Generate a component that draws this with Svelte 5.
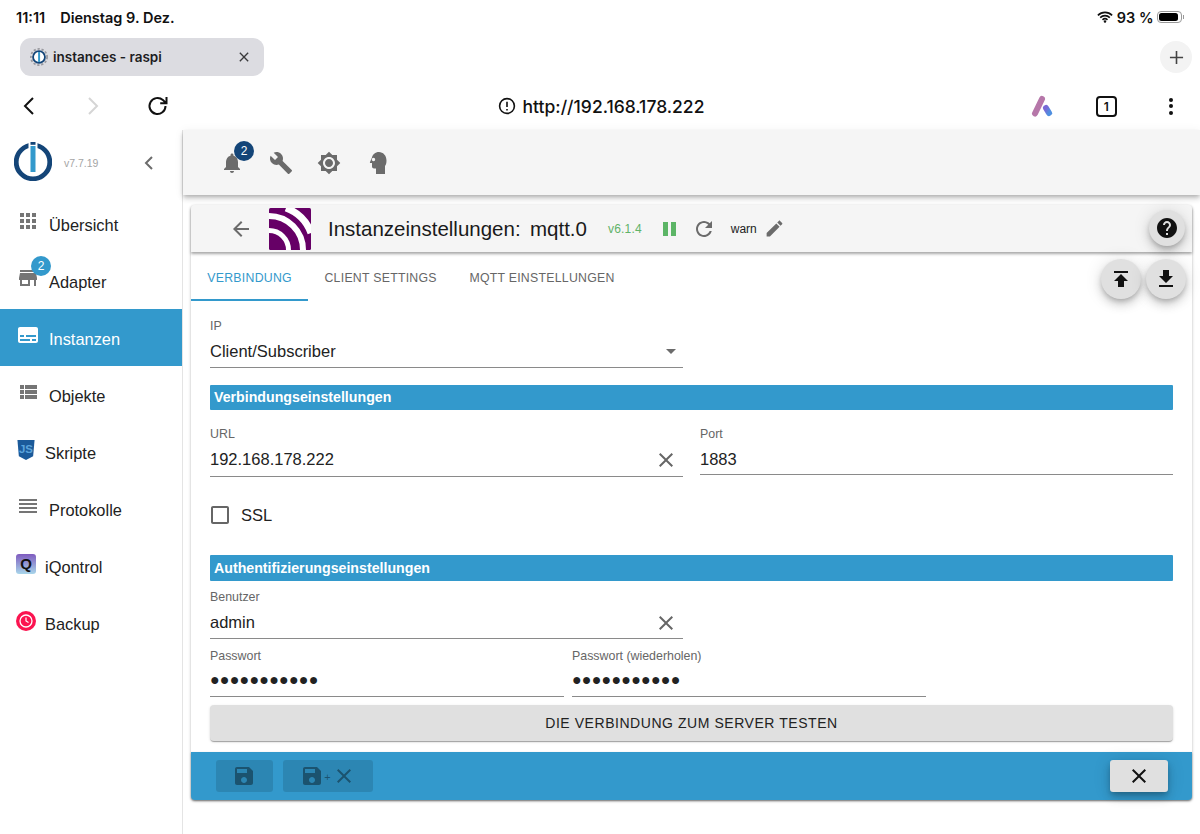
<script>
  const P = {
    apps: 'M4 8h4V4H4v4zm6 12h4v-4h-4v4zm-6 0h4v-4H4v4zm0-6h4v-4H4v4zm6 0h4v-4h-4v4zm6-10v4h4V4h-4zm-6 4h4V4h-4v4zm6 6h4v-4h-4v4zm0 6h4v-4h-4v4z',
    store: 'M20 4H4v2h16V4zm1 10v-2l-1-5H4l-1 5v2h1v6h10v-6h4v6h2v-6h1zm-9 4H6v-4h6v4z',
    subs: 'M20 4H4c-1.1 0-2 .9-2 2v12c0 1.1.9 2 2 2h16c1.1 0 2-.9 2-2V6c0-1.1-.9-2-2-2zM4 12h4v2H4v-2zm10 6H4v-2h10v2zm6 0h-4v-2h4v2zm0-4H10v-2h10v2z',
    list: 'M4 14h4v-4H4v4zm0 5h4v-4H4v4zM4 9h4V5H4v4zm5 5h12v-4H9v4zm0 5h12v-4H9v4zM9 5v4h12V5H9z',
    lines: 'M3 15h18v-2H3v2zm0 4h18v-2H3v2zm0-8h18V9H3v2zm0-6v2h18V5H3z',
    bell: 'M12 22c1.1 0 2-.9 2-2h-4c0 1.1.89 2 2 2zm6-6v-5c0-3.07-1.64-5.64-4.5-6.32V4c0-.83-.67-1.5-1.5-1.5s-1.5.67-1.5 1.5v.68C7.63 5.36 6 7.92 6 11v5l-2 2v1h16v-1l-2-2z',
    wrench: 'M22.7 19l-9.1-9.1c.9-2.3.4-5-1.5-6.9-2-2-5-2.4-7.4-1.3L9 6 6 9 1.6 4.7C.4 7.1.9 10.1 2.9 12.1c1.9 1.9 4.6 2.4 6.9 1.5l9.1 9.1c.4.4 1 .4 1.4 0l2.3-2.3c.5-.4.5-1.1.1-1.4z',
    gear: 'M20 8.69V4h-4.69L12 .69 8.69 4H4v4.69L.69 12 4 15.31V20h4.69L12 23.31 15.31 20H20v-4.69L23.31 12 20 8.69zM12 18c-3.31 0-6-2.69-6-6s2.69-6 6-6 6 2.69 6 6-2.69 6-6 6zm0-10c-2.21 0-4 1.79-4 4s1.79 4 4 4 4-1.79 4-4-1.79-4-4-4z',
    head: 'M13 1C9.200 1 6.500 3.500 6 6.500L4 11c-.3.600 0 1 .6 1H6v3.500c0 1.100.9 2 2 2h2V23h9v-8c1-1.200 1.500-3 1.500-5.500C20.500 4.500 17 1 13 1zM7.500 10.200a1.700 1.700 0 1 1 0-3.400 1.700 1.700 0 0 1 0 3.400z',
    back: 'M20 11H7.83l5.59-5.59L12 4l-8 8 8 8 1.41-1.41L7.83 13H20v-2z',
    refresh: 'M17.65 6.35C16.2 4.9 14.21 4 12 4c-4.42 0-7.99 3.58-7.99 8s3.57 8 7.99 8c3.73 0 6.84-2.55 7.73-6h-2.08c-.82 2.33-3.04 4-5.65 4-3.31 0-6-2.69-6-6s2.69-6 6-6c1.66 0 3.14.69 4.22 1.78L13 11h7V4l-2.35 2.35z',
    edit: 'M3 17.25V21h3.75L17.81 9.94l-3.75-3.75L3 17.25zM20.71 7.04c.39-.39.39-1.02 0-1.41l-2.34-2.34c-.39-.39-1.02-.39-1.41 0l-1.83 1.83 3.75 3.75 1.83-1.83z',
    help: 'M12 2C6.48 2 2 6.48 2 12s4.48 10 10 10 10-4.48 10-10S17.52 2 12 2zm1 17h-2v-2h2v2zm2.07-7.75l-.9.92C13.45 12.9 13 13.5 13 15h-2v-.5c0-1.1.45-2.1 1.17-2.83l1.24-1.26c.37-.36.59-.86.59-1.41 0-1.1-.9-2-2-2s-2 .9-2 2H8c0-2.21 1.79-4 4-4s4 1.79 4 4c0 .88-.36 1.68-.93 2.25z',
    up: 'M5 4v2h14V4H5zm0 10h4v6h6v-6h4l-7-7-7 7z',
    down: 'M19 9h-4V3H9v6H5l7 7 7-7zM5 18v2h14v-2H5z',
    save: 'M17 3H5c-1.11 0-2 .9-2 2v14c0 1.1.89 2 2 2h14c1.1 0 2-.9 2-2V7l-4-4zm-5 16c-1.66 0-3-1.34-3-3s1.34-3 3-3 3 1.34 3 3-1.34 3-3 3zm3-10H5V5h10v4z',
    close: 'M19 6.41L17.59 5 12 10.59 6.41 5 5 6.41 10.59 12 5 17.59 6.41 19 12 13.41 17.59 19 19 17.59 13.41 12z',
    box: 'M19 5v14H5V5h14m0-2H5c-1.1 0-2 .9-2 2v14c0 1.1.9 2 2 2h14c1.1 0 2-.9 2-2V5c0-1.1-.9-2-2-2z'
  };
  const nav = [
    { label: 'Übersicht', icon: 'apps' },
    { label: 'Adapter', icon: 'store', badge: '2' },
    { label: 'Instanzen', icon: 'subs', active: true },
    { label: 'Objekte', icon: 'list' },
    { label: 'Skripte', img: 'js' },
    { label: 'Protokolle', icon: 'lines' },
    { label: 'iQontrol', img: 'iq' },
    { label: 'Backup', img: 'backup' }
  ];
  const dots = '●●●●●●●●●●●';
</script>

{#snippet ic(name, cls = '')}
  <svg class="ic {cls}" viewBox="0 0 24 24" aria-hidden="true"><path d={P[name]} /></svg>
{/snippet}

{#snippet field(label, value, cls = '', clear = false)}
  <div class="field {cls}">
    <span class="flabel">{label}</span>
    <div class="fvalue">
      <span>{value}</span>
      {#if clear}{@render ic('close', 'clear')}{/if}
    </div>
  </div>
{/snippet}

<div class="page">
  <header class="status">
    <div class="st-left"><span>11:11</span><span>Dienstag 9. Dez.</span></div>
    <div class="st-right">
      <svg class="wifi" viewBox="0 0 18 13" aria-hidden="true">
        <path d="M1 4.600a11.400 11.400 0 0 1 16 0M3.600 7.200a7.700 7.700 0 0 1 10.800 0M6.200 9.700a4 4 0 0 1 5.600 0" />
        <circle cx="9" cy="11.600" r="1.400" />
      </svg>
      <span>93 %</span>
      <span class="batt"><span class="batt-fill"></span></span>
      <span class="batt-tip"></span>
    </div>
  </header>

  <div class="tabstrip">
    <div class="btab">
      <svg class="fav" viewBox="0 0 20 20" aria-hidden="true">
        <circle cx="10" cy="10" r="9" fill="none" stroke="#9a9aa0" stroke-width="2" stroke-dasharray="2.500 2" />
        <circle cx="10" cy="10" r="6.600" fill="#fff" stroke="#144578" stroke-width="2" />
        <rect x="9" y="4.500" width="2.200" height="11" fill="#3399cc" />
      </svg>
      <span class="btab-title">instances - raspi</span>
      <svg class="btab-x" viewBox="0 0 12 12" aria-hidden="true"><path d="M1 1l10 10M11 1L1 11" /></svg>
    </div>
    <div class="plus"><svg viewBox="0 0 16 16" aria-hidden="true"><path d="M8 1v14M1 8h14" /></svg></div>
  </div>

  <div class="urlbar">
    <div class="ub-left">
      <svg class="chev" viewBox="0 0 14 20" aria-hidden="true"><path d="M11 2L3 10l8 8" /></svg>
      <svg class="chev dim" viewBox="0 0 14 20" aria-hidden="true"><path d="M3 2l8 8-8 8" /></svg>
      <svg class="reload" viewBox="0 0 24 24" aria-hidden="true"><path d="M19.500 12a8 8 0 1 1-2.600-5.900L20 9M20.500 3v6.300h-6.300" /></svg>
    </div>
    <div class="ub-url">
      <svg class="warn-i" viewBox="0 0 18 18" aria-hidden="true">
        <circle cx="9" cy="9" r="7.400" />
        <path d="M9 4.800v5.200M9 12v1.400" />
      </svg>
      <span>http://192.168.178.222</span>
    </div>
    <div class="ub-right">
      <div class="ub-btn">
        <svg class="acc" viewBox="0 0 24 22" aria-hidden="true">
          <defs>
            <linearGradient id="agr" x1="0" y1="0" x2="1" y2="1">
              <stop offset="0" stop-color="#7a68d6" />
              <stop offset="1" stop-color="#4f8fe0" />
            </linearGradient>
          </defs>
          <path d="M5 18.500L12 4" stroke="#b677a9" />
          <path d="M16 13l3 5" stroke="url(#agr)" />
        </svg>
      </div>
      <div class="ub-btn"><span class="tabcount">1</span></div>
      <div class="ub-btn"><span class="kebab"><i></i><i></i><i></i></span></div>
    </div>
  </div>

  <div class="app">
    <aside class="side">
      <div class="brand">
        <svg class="logo" viewBox="0 0 38 40" aria-hidden="true">
          <circle cx="19" cy="21" r="16.800" fill="none" stroke="#144578" stroke-width="4.800" />
          <rect x="14.500" y="0" width="9" height="31" fill="#fff" />
          <rect x="16.500" y="1" width="5" height="2.800" fill="#144578" />
          <rect x="16.500" y="5" width="5" height="26" fill="#3399cc" />
        </svg>
        <span class="ver">v7.7.19</span>
        <svg class="collapse" viewBox="0 0 12 16" aria-hidden="true"><path d="M9 2L3 8l6 6" /></svg>
      </div>
      {#each nav as n}
        <div class="item" class:active={n.active} class:img={n.img}>
          <span class="item-ic">
            {#if n.icon}{@render ic(n.icon)}{/if}
            {#if n.img === 'js'}
              <svg class="brandic" viewBox="0 0 20 21" aria-hidden="true">
                <path d="M1 0h18l-1.500 17L10 21l-7.500-4z" fill="#1b5a9a" />
                <text x="10" y="14" text-anchor="middle" class="jstxt">JS</text>
              </svg>
            {/if}
            {#if n.img === 'iq'}
              <span class="iq">Q</span>
            {/if}
            {#if n.img === 'backup'}
              <svg class="brandic" viewBox="0 0 20 20" aria-hidden="true">
                <circle cx="10" cy="10" r="10" fill="#fb1450" />
                <circle cx="10" cy="10" r="6" fill="none" stroke="#fff" stroke-width="1.300" />
                <path d="M10 6.500V10l2.500 1.500" fill="none" stroke="#fff" stroke-width="1.200" />
              </svg>
            {/if}
            {#if n.badge}<span class="nbadge">{n.badge}</span>{/if}
          </span>
          <span class="item-label">{n.label}</span>
        </div>
      {/each}
    </aside>

    <main class="main">
      <div class="toolbar">
        <span class="tool">{@render ic('bell')}<span class="tbadge">2</span></span>
        <span class="tool">{@render ic('wrench')}</span>
        <span class="tool">{@render ic('gear')}</span>
        <span class="tool">{@render ic('head')}</span>
      </div>

      <section class="card">
        <div class="chead">
          <span class="cback">{@render ic('back')}</span>
          <svg class="mqtt" viewBox="0 0 42 42" aria-hidden="true">
            <rect width="42" height="42" rx="1.500" fill="#660066" />
            <g fill="none" stroke="#fff">
              <path d="M0 22.500A19.500 19.500 0 0 1 19.500 42" stroke-width="5" />
              <path d="M0 8A34 34 0 0 1 34 42" stroke-width="6" />
              <path d="M17 0A42 42 0 0 1 42 25" stroke-width="7" />
            </g>
          </svg>
          <h1 class="title">Instanzeinstellungen:&nbsp; mqtt.0</h1>
          <span class="cver">v6.1.4</span>
          <span class="pause"><i></i><i></i></span>
          <span class="crefresh">{@render ic('refresh')}</span>
          <span class="level">warn</span>
          <span class="cedit">{@render ic('edit')}</span>
          <span class="fab helpfab">{@render ic('help')}</span>
        </div>

        <div class="tabs">
          <span class="tab on">Verbindung</span>
          <span class="tab">Client settings</span>
          <span class="tab">MQTT Einstellungen</span>
          <span class="fab upfab">{@render ic('up')}</span>
          <span class="fab downfab">{@render ic('down')}</span>
        </div>

        <div class="form">
          <div class="field half select">
            <span class="flabel">IP</span>
            <div class="fvalue">
              <span>Client/Subscriber</span>
              <span class="caret"></span>
            </div>
          </div>

          <div class="sect s1">Verbindungseinstellungen</div>

          <div class="row r-url">
            {@render field('URL', '192.168.178.222', 'half', true)}
            {@render field('Port', '1883', 'half port')}
          </div>

          <div class="check">
            {@render ic('box', 'cb')}
            <span>SSL</span>
          </div>

          <div class="sect s2">Authentifizierungseinstellungen</div>

          {@render field('Benutzer', 'admin', 'half user', true)}

          <div class="row r-pass">
            {@render field('Passwort', dots, 'third pw')}
            {@render field('Passwort (wiederholen)', dots, 'third pw')}
          </div>

          <div class="testbtn">Die Verbindung zum Server testen</div>
        </div>

        <footer class="cfoot">
          <span class="fbtn b1">{@render ic('save')}</span>
          <span class="fbtn b2">{@render ic('save')}<span class="fplus">+</span>{@render ic('close', 'fx')}</span>
          <span class="fclose">{@render ic('close')}</span>
        </footer>
      </section>
    </main>
  </div>
</div>

<style>
  :global(body) { margin: 0; background: #fff; }
  .page { width: 1200px; height: 834px; overflow: hidden; font-family: "Liberation Sans", Arial, sans-serif; color: #222; display: flex; flex-direction: column; }
  .ic { width: 24px; height: 24px; display: block; fill: currentColor; flex: none; }

  /* status */
  .status { height: 34px; flex: none; display: flex; justify-content: space-between; align-items: center; font-family: Inter, sans-serif; font-weight: 600; font-size: 14.500px; color: #111; padding: 0 16px; box-sizing: border-box; }
  .st-left { display: flex; gap: 15px; }
  .st-right { display: flex; align-items: center; margin-right: 0; font-size: 14.500px; }
  .wifi { width: 16px; height: 12px; margin-right: 4px; fill: #111; }
  .wifi path { fill: none; stroke: #111; stroke-width: 1.800; }
  .batt { width: 25px; height: 12px; border: 1px solid #999; border-radius: 4px; margin-left: 3px; padding: 1px; box-sizing: border-box; display: block; }
  .batt-fill { display: block; width: 93%; height: 100%; background: #000; border-radius: 2.500px; }
  .batt-tip { width: 1.500px; height: 4px; background: #999; margin-left: 1px; }

  /* tabs strip */
  .tabstrip { height: 46px; flex: none; display: flex; justify-content: space-between; align-items: flex-start; padding: 4px 8px 0 20px; box-sizing: border-box; }
  .btab { width: 244px; height: 38px; background: #dcdce1; border-radius: 11px; display: flex; align-items: center; padding-left: 10px; box-sizing: border-box; }
  .fav { width: 18px; height: 18px; margin-right: 5px; }
  .btab-title { font-family: Inter, sans-serif; font-weight: 600; font-size: 13.500px; color: #1d1d1f; flex: 1; }
  .btab-x { width: 10px; height: 10px; margin-right: 15px; fill: none; stroke: #3a3a3c; stroke-width: 1.600; }
  .plus { width: 32px; height: 32px; border-radius: 50%; background: #f3f3f3; display: flex; align-items: center; justify-content: center; margin-top: 3px; }
  .plus svg { width: 15px; height: 15px; fill: none; stroke: #444; stroke-width: 1.700; }

  /* url bar */
  .urlbar { height: 50px; flex: none; display: grid; grid-template-columns: 1fr auto 1fr; align-items: center; padding-top: 2px; box-sizing: border-box; }
  .ub-left { display: flex; align-items: center; }
  .chev { width: 14px; height: 20px; fill: none; stroke: #111; stroke-width: 2; margin-left: 22px; margin-right: 28px; }
  .chev.dim { stroke: #d5d5d5; margin-left: 22px; }
  .reload { width: 24px; height: 24px; fill: none; stroke: #111; stroke-width: 2; margin-left: 18px; }
  .ub-url { display: flex; align-items: center; gap: 7px; padding-left: 2px; font-family: Inter, sans-serif; font-weight: 500; font-size: 17.500px; color: #111; }
  .warn-i { width: 18px; height: 18px; fill: none; stroke: #111; stroke-width: 1.600; }
  .ub-right { display: flex; justify-content: flex-end; margin-right: -3px; }
  .ub-btn { width: 64.500px; display: flex; justify-content: center; align-items: center; height: 30px; }
  .acc { width: 24px; height: 22px; fill: none; stroke-width: 6; stroke-linecap: round; }
  .tabcount { width: 21px; height: 21px; border: 2px solid #111; border-radius: 4px; box-sizing: border-box; display: flex; align-items: center; justify-content: center; font-family: Inter, sans-serif; font-size: 12px; font-weight: 600; color: #111; }
  .kebab { display: flex; flex-direction: column; gap: 2.500px; }
  .kebab i { width: 4px; height: 4px; background: #111; border-radius: 50%; display: block; }

  /* app */
  .app { flex: 1; min-height: 0; display: grid; grid-template-columns: 183px 1fr; }
  .side { border-right: 1px solid #e4e4e4; box-sizing: border-box; display: flex; flex-direction: column; }
  .brand { height: 65px; flex: none; display: flex; align-items: center; position: relative; padding-left: 14px; box-sizing: border-box; }
  .logo { width: 38px; height: 40px; margin-top: -3px; }
  .ver { font-size: 10.500px; color: #a5a5a5; margin-left: 12px; }
  .collapse { width: 12px; height: 16px; fill: none; stroke: #6c6c6c; stroke-width: 2; margin-left: 45px; }
  .item { height: 57px; flex: none; display: flex; align-items: center; box-sizing: border-box; font-size: 16.400px; color: #222; padding-left: 16px; }
  .item-ic { width: 24px; height: 24px; position: relative; margin-right: 9px; margin-top: -5px; color: #757575; }
  .item.img .item-ic { width: 20px; height: 20px; margin-right: 9px; margin-top: -4px; }
  .item-label { padding-top: 3px; }
  .item.active { background: #3399cc; color: #fff; }
  .item.active .item-ic { color: #fff; }
  .brandic { width: 20px; height: 20px; display: block; }
  .jstxt { font: 700 12px "Liberation Sans", sans-serif; fill: #5ba4dc; }
  .iq { width: 20px; height: 20px; display: flex; align-items: center; justify-content: center; border-radius: 3px; background: linear-gradient(#7f5bbf, #a8d6ea); color: #111; font-weight: 700; font-size: 15px; }
  .nbadge { position: absolute; left: 15px; top: -10px; width: 20px; height: 20px; border-radius: 50%; background: #3399cc; color: #fff; font-size: 12px; display: flex; align-items: center; justify-content: center; }

  /* main */
  .main { min-width: 0; display: flex; flex-direction: column; }
  .toolbar { height: 65px; flex: none; background: #f5f5f5; display: flex; align-items: center; padding-left: 25px; box-shadow: 0 2px 4px -1px rgba(0,0,0,.2), 0 4px 5px 0 rgba(0,0,0,.14), 0 1px 10px 0 rgba(0,0,0,.06); position: relative; }
  .tool { width: 24px; height: 24px; padding: 0 12.250px; color: #6b6b6b; position: relative; }
  .tbadge { position: absolute; left: 26px; top: -10px; width: 20px; height: 20px; border-radius: 50%; background: #144578; color: #fff; font-size: 12px; display: flex; align-items: center; justify-content: center; }

  .card { margin: 10px 8px 0; height: 595px; background: #fff; border-radius: 4px; box-shadow: 0 1px 3px rgba(0,0,0,.3); display: flex; flex-direction: column; flex: none; position: relative; }
  .chead { height: 47px; flex: none; background: #f5f5f5; display: flex; align-items: center; position: relative; border-radius: 4px 4px 0 0; box-shadow: 0 2px 3px rgba(0,0,0,.35); z-index: 2; }
  .cback { color: #6b6b6b; margin-left: 38px; margin-right: 16px; }
  .mqtt { width: 42px; height: 42px; }
  .title { font-weight: 400; font-size: 20.500px; color: #1a1a1a; margin: 0 0 0 17px; white-space: nowrap; word-spacing: -1px; }
  .cver { font-size: 12px; color: #5fb368; margin-left: 21px; letter-spacing: .2px; }
  .pause { display: flex; gap: 3.500px; margin-left: 21px; }
  .pause i { display: block; width: 4.700px; height: 14px; background: #5cb566; }
  .crefresh { color: #6b6b6b; margin-left: 16px; }
  .level { font-size: 12px; color: #222; margin-left: 15px; }
  .cedit { color: #6b6b6b; margin-left: 7px; }
  .cedit .ic { width: 21px; height: 21px; }

  .fab { position: absolute; border-radius: 50%; background: #e0e0e0; box-shadow: 0 3px 5px -1px rgba(0,0,0,.2), 0 6px 10px 0 rgba(0,0,0,.14), 0 1px 18px 0 rgba(0,0,0,.12); display: flex; align-items: center; justify-content: center; color: #111; z-index: 3; }
  .helpfab { width: 36px; height: 36px; right: 7px; top: 5px; }
  .upfab, .downfab { width: 40px; height: 40px; top: 7px; }
  .upfab { right: 51px; }
  .downfab { right: 6px; }

  .tabs { height: 49px; flex: none; display: flex; position: relative; z-index: 2; }
  .tab { padding: 3px 16.300px 1px; display: flex; align-items: center; font-size: 12.300px; text-transform: uppercase; color: #666; letter-spacing: .26px; box-sizing: border-box; height: 49px; }
  .tab.on { color: #3399cc; box-shadow: inset 0 -2px 0 #3399cc; }

  .form { flex: 1; min-height: 0; padding: 0 19px; display: flex; flex-direction: column; }
  .field { display: flex; flex-direction: column; border-bottom: 1px solid #8a8a8a; box-sizing: border-box; flex: none; }
  .half { width: 473px; }
  .third { width: 354px; }
  .flabel { font-size: 12.400px; color: #666; line-height: 14px; }
  .fvalue { display: flex; justify-content: space-between; align-items: center; font-size: 16.500px; color: #222; height: 25px; margin-top: 6px; }
  .select { margin-top: 18px; height: 49px; }
  .caret { width: 0; height: 0; border-left: 5px solid transparent; border-right: 5px solid transparent; border-top: 5px solid #6b6b6b; margin-right: 7px; }
  .sect { background: #3399cc; color: #fff; font-weight: 700; font-size: 14.200px; height: 25px; line-height: 25px; padding-left: 4px; flex: none; border-radius: 1px; }
  .s1 { margin-top: 17px; }
  .s2 { margin-top: 28px; height: 26px; line-height: 26px; }
  .row { display: flex; flex: none; }
  .r-url { gap: 17px; margin-top: 17px; align-items: flex-start; }
  .r-url .half { height: 50px; }
  .r-url .port { height: 48px; }
  .clear { width: 24px; height: 24px; color: #666; margin-right: 5px; }
  .check { display: flex; align-items: center; height: 24px; margin-top: 26px; margin-left: -2px; color: #222; font-size: 16.500px; flex: none; }
  .cb { color: #666; margin-right: 9px; }
  .user { margin-top: 9px; height: 49px; }
  .r-pass { gap: 8px; margin-top: 10px; }
  .pw { height: 48px; }
  .pw .fvalue { font-size: 16px; letter-spacing: .2px; margin-top: 4px; }
  .testbtn { margin-top: 8px; height: 36px; background: #e0e0e0; border-radius: 4px; display: flex; align-items: center; justify-content: center; font-size: 14px; text-transform: uppercase; color: #222; letter-spacing: .55px; box-shadow: 0 2px 1px -1px rgba(0,0,0,.2), 0 1px 1px 0 rgba(0,0,0,.14), 0 1px 3px 0 rgba(0,0,0,.12); flex: none; }

  .cfoot { height: 48px; flex: none; background: #3399cc; border-radius: 0 0 4px 4px; display: flex; align-items: center; padding: 0 24px 0 25px; gap: 10px; box-shadow: 0 1px 2px rgba(0,0,0,.4); }
  .fbtn { height: 32px; background: rgba(0,0,0,.12); border-radius: 3px; display: flex; align-items: center; justify-content: center; color: rgba(0,0,0,.38); }
  .b1 { width: 57px; padding-right: 2px; box-sizing: border-box; }
  .b2 { width: 90px; }
  .fplus { font-size: 11px; margin: 2px 1px 0 0; }
  .fclose { width: 58px; height: 32px; margin-left: auto; background: #e0e0e0; border-radius: 3px; display: flex; align-items: center; justify-content: center; color: #111; box-shadow: 0 3px 5px -1px rgba(0,0,0,.2), 0 6px 10px 0 rgba(0,0,0,.14), 0 1px 18px 0 rgba(0,0,0,.12); }
</style>
